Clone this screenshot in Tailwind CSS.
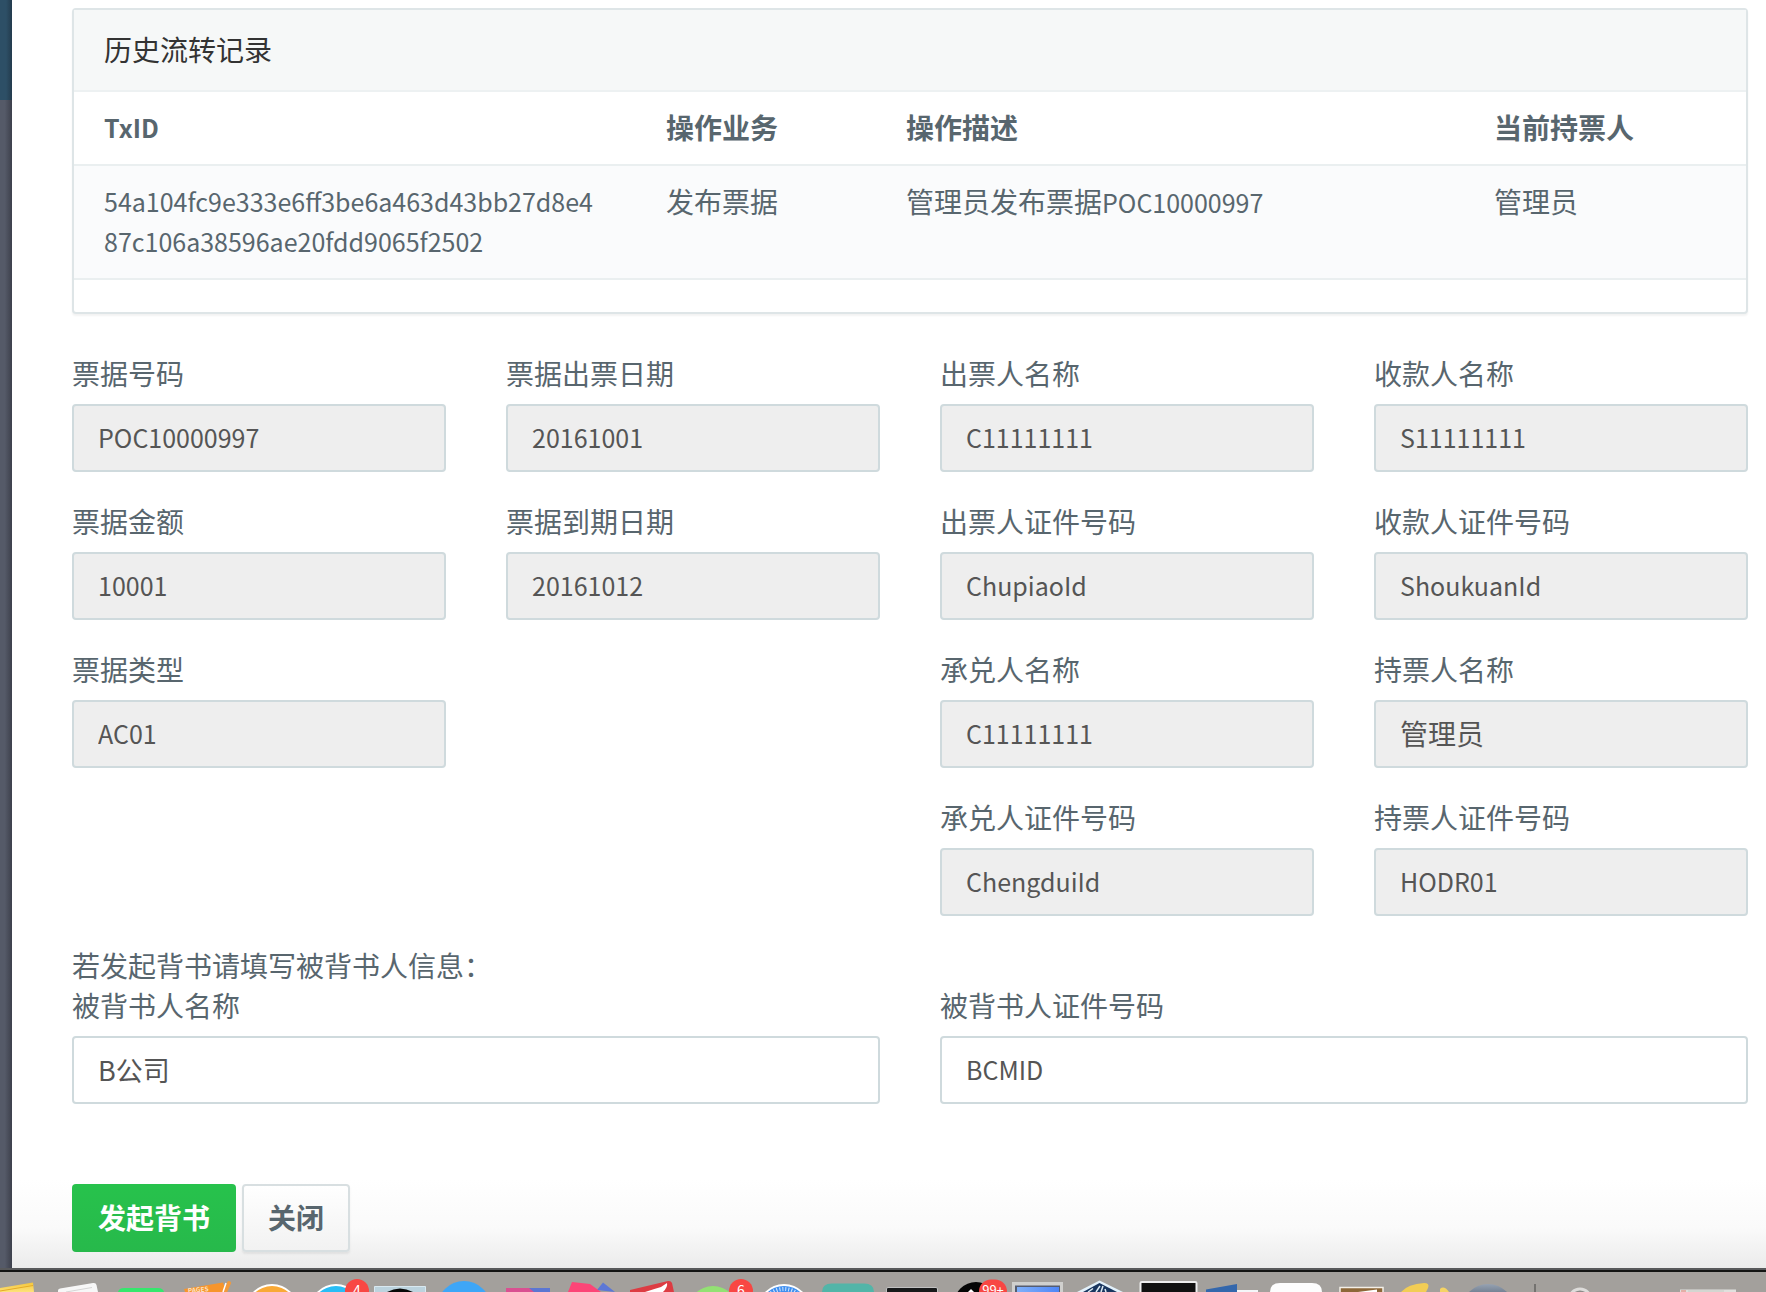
<!DOCTYPE html>
<html lang="zh-CN">
<head>
<meta charset="utf-8">
<meta name="viewport" content="width=device-width, initial-scale=1">
<title>票据详情</title>
<script src="https://cdn.jsdelivr.net/npm/@tailwindcss/browser@4"></script>
</head>
<body class="overflow-x-hidden bg-white font-['Noto_Sans_CJK_SC','Noto_Sans',sans-serif] text-[28px] leading-10 text-[#58666e]">
<div class="flex">
  <!-- Dimmed page behind the dialog -->
  <aside class="flex w-3 shrink-0 flex-col">
    <div class="h-[100px] bg-linear-to-r from-[#2d4f66] from-50% to-[#233b4d]"></div>
    <div class="flex-1 bg-linear-to-r from-[#555a68] from-40% to-[#3d404c]"></div>
  </aside>

  <main class="min-w-0 flex-1 bg-linear-to-t from-[#ebebeb] via-[#fafafa] via-[40px] to-white to-[88px] pt-2 pr-[18px] pb-4 pl-[60px]">
    <section class="rounded-sm border-2 border-[#dee5e7] bg-white pb-8 shadow-[0_2px_2px_rgba(0,0,0,0.05)]">
      <h2 class="border-b-2 border-[#edf1f2] bg-[#f6f8f8] px-[30px] pt-[19px] pb-[21px] text-[#333]">历史流转记录</h2>
      <table class="w-full table-fixed border-separate border-spacing-0 text-left">
        <colgroup><col class="w-[562px]"><col class="w-[240px]"><col><col class="w-[282px]"></colgroup>
        <thead>
          <tr>
            <th class="border-b-2 border-[#eaeff0] px-[30px] pt-[15px] pb-[17px] text-[25px] leading-10 font-bold">TxID</th>
            <th class="border-b-2 border-[#eaeff0] px-[30px] pt-[15px] pb-[17px] font-bold">操作业务</th>
            <th class="border-b-2 border-[#eaeff0] px-[30px] pt-[15px] pb-[17px] font-bold">操作描述</th>
            <th class="border-b-2 border-[#eaeff0] px-[30px] pt-[15px] pb-[17px] font-bold">当前持票人</th>
          </tr>
        </thead>
        <tbody>
          <tr class="bg-[#fafbfc] align-top">
            <td class="border-b-2 border-[#eaeff0] px-[30px] pt-[15px] pb-[17px] text-[25px] leading-10 break-all">54a104fc9e333e6ff3be6a463d43bb27d8e487c106a38596ae20fdd9065f2502</td>
            <td class="border-b-2 border-[#eaeff0] px-[30px] pt-[15px] pb-[17px]">发布票据</td>
            <td class="border-b-2 border-[#eaeff0] px-[30px] pt-[15px] pb-[17px]">管理员发布票据<span class="text-[25px]">POC10000997</span></td>
            <td class="border-b-2 border-[#eaeff0] px-[30px] pt-[15px] pb-[17px]">管理员</td>
          </tr>
        </tbody>
      </table>
    </section>

    <form>
      <div class="mt-[39px] grid grid-cols-4 gap-x-[60px] gap-y-[29px]">
        <div class="flex flex-col gap-[11px]"><label for="f1">票据号码</label><input id="f1" disabled value="POC10000997" class="h-[68px] w-full rounded-sm border-2 border-[#cfdadd] bg-[#eee] px-6 pb-0.5 text-[25px] text-[#555]"></div>
        <div class="flex flex-col gap-[11px]"><label for="f2">票据出票日期</label><input id="f2" disabled value="20161001" class="h-[68px] w-full rounded-sm border-2 border-[#cfdadd] bg-[#eee] px-6 pb-0.5 text-[25px] text-[#555]"></div>
        <div class="flex flex-col gap-[11px]"><label for="f3">出票人名称</label><input id="f3" disabled value="C11111111" class="h-[68px] w-full rounded-sm border-2 border-[#cfdadd] bg-[#eee] px-6 pb-0.5 text-[25px] text-[#555]"></div>
        <div class="flex flex-col gap-[11px]"><label for="f4">收款人名称</label><input id="f4" disabled value="S11111111" class="h-[68px] w-full rounded-sm border-2 border-[#cfdadd] bg-[#eee] px-6 pb-0.5 text-[25px] text-[#555]"></div>
        <div class="flex flex-col gap-[11px]"><label for="f5">票据金额</label><input id="f5" disabled value="10001" class="h-[68px] w-full rounded-sm border-2 border-[#cfdadd] bg-[#eee] px-6 pb-0.5 text-[25px] text-[#555]"></div>
        <div class="flex flex-col gap-[11px]"><label for="f6">票据到期日期</label><input id="f6" disabled value="20161012" class="h-[68px] w-full rounded-sm border-2 border-[#cfdadd] bg-[#eee] px-6 pb-0.5 text-[25px] text-[#555]"></div>
        <div class="flex flex-col gap-[11px]"><label for="f7">出票人证件号码</label><input id="f7" disabled value="ChupiaoId" class="h-[68px] w-full rounded-sm border-2 border-[#cfdadd] bg-[#eee] px-6 pb-0.5 text-[25px] text-[#555]"></div>
        <div class="flex flex-col gap-[11px]"><label for="f8">收款人证件号码</label><input id="f8" disabled value="ShoukuanId" class="h-[68px] w-full rounded-sm border-2 border-[#cfdadd] bg-[#eee] px-6 pb-0.5 text-[25px] text-[#555]"></div>
        <div class="flex flex-col gap-[11px]"><label for="f9">票据类型</label><input id="f9" disabled value="AC01" class="h-[68px] w-full rounded-sm border-2 border-[#cfdadd] bg-[#eee] px-6 pb-0.5 text-[25px] text-[#555]"></div>
        <div class="col-start-3 flex flex-col gap-[11px]"><label for="f10">承兑人名称</label><input id="f10" disabled value="C11111111" class="h-[68px] w-full rounded-sm border-2 border-[#cfdadd] bg-[#eee] px-6 pb-0.5 text-[25px] text-[#555]"></div>
        <div class="flex flex-col gap-[11px]"><label for="f11">持票人名称</label><input id="f11" disabled value="管理员" class="h-[68px] w-full rounded-sm border-2 border-[#cfdadd] bg-[#eee] px-6 pb-0.5 text-[28px] text-[#555]"></div>
        <div class="col-start-3 flex flex-col gap-[11px]"><label for="f12">承兑人证件号码</label><input id="f12" disabled value="ChengduiId" class="h-[68px] w-full rounded-sm border-2 border-[#cfdadd] bg-[#eee] px-6 pb-0.5 text-[25px] text-[#555]"></div>
        <div class="flex flex-col gap-[11px]"><label for="f13">持票人证件号码</label><input id="f13" disabled value="HODR01" class="h-[68px] w-full rounded-sm border-2 border-[#cfdadd] bg-[#eee] px-6 pb-0.5 text-[25px] text-[#555]"></div>
      </div>

      <p class="mt-[29px]">若发起背书请填写被背书人信息：</p>
      <div class="grid grid-cols-2 gap-x-[60px]">
        <div class="flex flex-col gap-[11px]"><label for="f14">被背书人名称</label><input id="f14" value="B公司" class="h-[68px] w-full rounded-sm border-2 border-[#cfdadd] bg-white px-6 pb-0.5 text-[27px] text-[#555]"></div>
        <div class="flex flex-col gap-[11px]"><label for="f15">被背书人证件号码</label><input id="f15" value="BCMID" class="h-[68px] w-full rounded-sm border-2 border-[#cfdadd] bg-white px-6 pb-0.5 text-[25px] text-[#555]"></div>
      </div>

      <div class="mt-20 flex gap-1.5">
        <button type="submit" class="h-[68px] rounded-sm bg-linear-to-b from-[#27c24c] to-[#27b94b] px-[26px] pb-0.5 font-bold text-white">发起背书</button>
        <button type="button" class="h-[68px] rounded-sm border-2 border-[#d8dfe1] bg-linear-to-b from-white to-[#f2f2f2] px-6 pb-0.5 font-bold shadow-[0_2px_2px_rgba(90,90,90,0.1)]">关闭</button>
      </div>
    </form>
  </main>
</div>

<!-- Top edge of the dock -->
<footer class="border-t-2 border-[#58595b] bg-[#a3a09c]">
  <svg class="block h-[22px] w-full" viewBox="0 0 1766 22" preserveAspectRatio="xMinYMin slice" role="img" aria-label="Dock">
    <defs>
      <linearGradient id="yel" x1="0" y1="0" x2="0" y2="1"><stop offset="0" stop-color="#f5c63a"/><stop offset="1" stop-color="#fde27a"/></linearGradient>
      <linearGradient id="scr" x1="0" y1="0" x2="1" y2="0"><stop offset="0" stop-color="#7fb0fa"/><stop offset="1" stop-color="#4f86f7"/></linearGradient>
      <linearGradient id="gry" x1="0" y1="0" x2="0" y2="1"><stop offset="0" stop-color="#96a2b2"/><stop offset=".3" stop-color="#566478"/></linearGradient>
    </defs>
    <rect width="1766" height="2" fill="#131413"/>
    <g transform="translate(0 2)">
      <path d="M0 16 33 10.500 34 20H0z" fill="url(#yel)"/><path d="M0 19 33 13.500" stroke="#e4ab26"/>
      <path d="M58 20V18.500Q58 17 60 16.600L93 11Q96 10.500 96.500 13L98 20z" fill="#f7f7f7"/><path d="M66 20 92 15.500" stroke="#d5d5d5"/>
      <path d="M118 20Q119 16 124 16H158Q163 16 164 20z" fill="#36e76d"/>
      <path d="M184 17 223 10.500 226 20H185z" fill="#f7952c"/><text x="188" y="21" font-size="6.500" font-weight="bold" fill="#fbe3c6" transform="rotate(-5 188 20)">PAGES</text>
      <path d="M229 11 225 20" stroke="#f29a3c" stroke-width="4" stroke-linecap="round"/><path d="M226 11 223 20" stroke="#fff" stroke-width="1.500"/>
      <circle cx="272" cy="38.500" r="26.500" fill="#fff"/><circle cx="272" cy="39" r="25" fill="#f9a936"/>
      <circle cx="336" cy="38.500" r="26.500" fill="#fff"/><circle cx="336" cy="39" r="25" fill="#29bdf5"/>
      <circle cx="357" cy="19" r="12" fill="#f84743"/><text x="357" y="24" font-size="14" text-anchor="middle" fill="#fff">4</text>
      <path d="M374.500 20V14.500H425.500V20" fill="#bcd3de" stroke="#d9e9f1"/><path d="M387 20Q400 13 413 20z" fill="#080808"/>
      <circle cx="464" cy="36" r="27" fill="#3ea6f7"/>
      <path d="M506 16H550V20H506z" fill="#d95091"/><path d="M529 16H550V20H534z" fill="#5b76d2"/>
      <path d="M597 18 603 10.500 615 20z" fill="#5c77d6"/><path d="M568 20 572 10 590 12 601 20z" fill="#fc4577"/>
      <path d="M630 18 668 9Q671 8.500 672 11L674 20H630z" fill="#dd3c43"/><path d="M645 20Q654 17 661 15L667 11Q668 15 663 20z" fill="#fff"/>
      <circle cx="713" cy="39" r="25" fill="#93e173"/>
      <circle cx="741" cy="19" r="12" fill="#f84743"/><text x="741" y="24" font-size="14" text-anchor="middle" fill="#fff">6</text>
      <circle cx="784" cy="38.500" r="26.500" fill="#fff"/><circle cx="784" cy="38.500" r="24.500" fill="#3f8ff0"/><circle cx="784" cy="38.500" r="21.500" fill="none" stroke="#d4e7fc" stroke-width="4" stroke-dasharray="1 2"/>
      <path d="M822 20Q822 11.500 832 11.500H864Q874 11.500 874 20z" fill="#52b5a8"/>
      <path d="M886.500 20V17Q886.500 15.500 888 15.500H936Q937.500 15.500 937.500 17V20" fill="#18191a" stroke="#c1c1c1"/>
      <circle cx="976" cy="32" r="22" fill="#050505"/><path d="M968 20 971 17 974 20z" fill="#fff"/>
      <rect x="979" y="7.500" width="28" height="24" rx="12" fill="#f84743"/><text x="993" y="23" font-size="13" text-anchor="middle" fill="#fff">99+</text>
      <path d="M1012 20V10H1063V20z" fill="#d0d0ce"/><path d="M1015 20V13.500H1060V20z" fill="#555d70"/><path d="M1017 20V15H1059V20z" fill="url(#scr)"/>
      <path d="M1077 20 1099.500 8.500 1123 20z" fill="#e3f1fa"/><path d="M1083 20 1099.500 11 1117 20z" fill="#19365f"/><path d="M1088 20 1093 16.500M1096 20 1100 14M1101 20 1103 14M1106 20 1105 17" stroke="#dcebf5" stroke-width="1.500"/>
      <path d="M1140.500 20V11Q1140.500 10 1142 10H1195Q1196.500 10 1196.500 11V20" fill="#111" stroke="#eee" stroke-width="2"/>
      <path d="M1237 18H1258V20H1237z" fill="#f4f6f8"/><path d="M1206 17.500 1237 12V20H1206z" fill="#3467ac"/>
      <path d="M1270 20Q1270 11 1280 11H1312Q1322 11 1322 20z" fill="#fdfdfd"/>
      <path d="M1340 20V15.500H1383V20" fill="#8d6738" stroke="#f3efe7" stroke-width="1.500"/><path d="M1358 20 1377 17.500V20z" fill="#fff"/>
      <path d="M1401 20Q1408 12 1424 11Q1430 11 1428 16L1426 20z" fill="#f2cd55"/><path d="M1440 20V17Q1444 13 1449 20z" fill="#f5d364"/>
      <circle cx="1488" cy="38.500" r="26.500" fill="url(#gry)"/>
      <path d="M1535 12V20" stroke="#74726f" stroke-width="2"/>
      <circle cx="1580" cy="28" r="11" fill="#8c8b89" stroke="#dddcda" stroke-width="3"/>
      <path d="M1680 17.500H1736V20H1680z" fill="#dfe0dd"/><path d="M1681 19H1686" stroke="#e57f71"/><path d="M1688 19H1724" stroke="#c7cbc4"/>
    </g>
  </svg>
</footer>
</body>
</html>
